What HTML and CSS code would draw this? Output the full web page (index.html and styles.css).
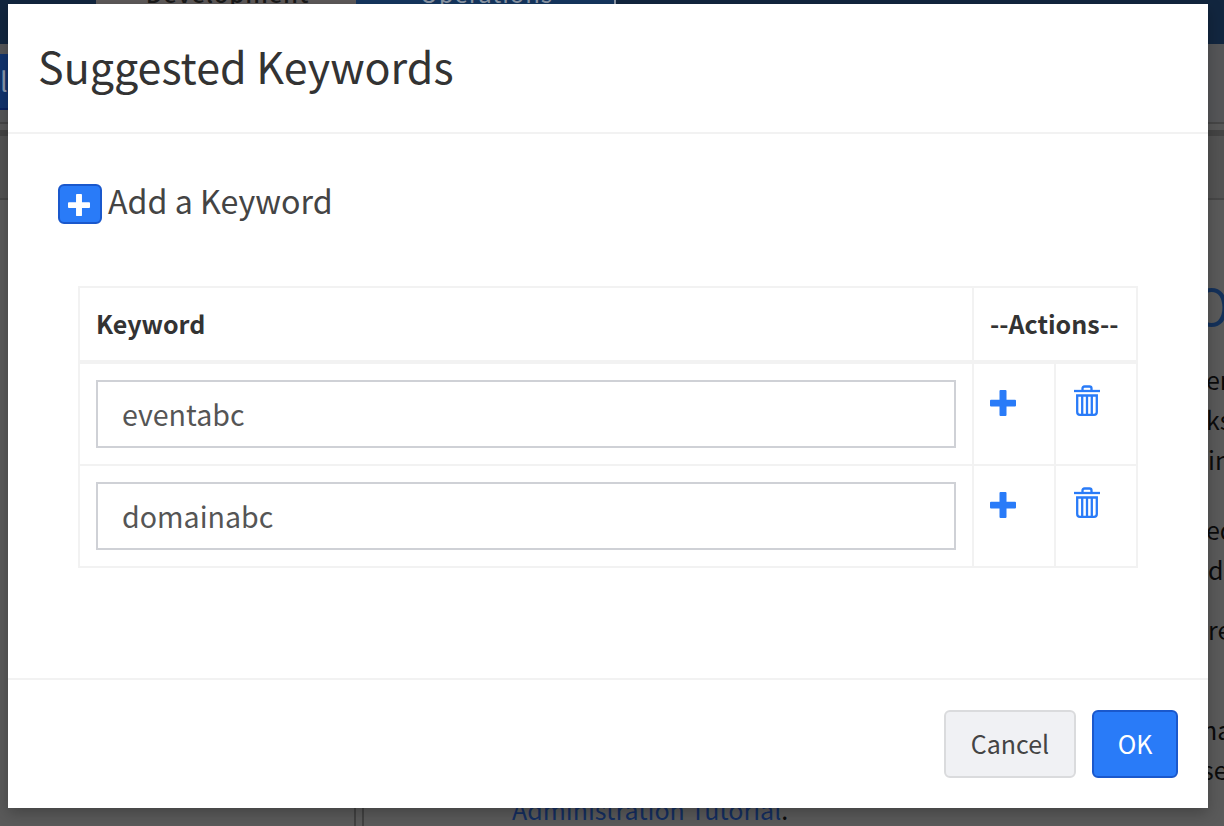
FILE: index.html
```
<!DOCTYPE html>
<html lang="en">
<head>
<meta charset="utf-8">
<title>Suggested Keywords</title>
<link rel="stylesheet" href="styles.css">
</head>
<body>
<svg class="symbols" aria-hidden="true">
  <symbol id="plus" viewBox="0 0 26 26"><path fill="currentColor" d="M10.500 0h5q1 0 1 1v8.800H25q1 0 1 1v4.600q0 1-1 1h-8.500V25q0 1-1 1h-5q-1 0-1-1v-8.600H1q-1 0-1-1v-4.600q0-1 1-1h8.500V1q0-1 1-1z"/></symbol>
  <symbol id="trash" viewBox="0 0 26 31"><g fill="none" stroke="currentColor" stroke-width="2.300"><path d="M0 6h26"/><path d="M8.500 5.500V3.500Q8.500 1.500 10.500 1.500h5Q17.500 1.500 17.500 3.500v2M3.200 10.500v16.500Q3.200 29.800 6 29.800h14q2.800 0 2.800-2.800V10.500z"/><path d="M8.200 10v20M13 10v20M17.800 10v20"/></g></symbol>
</svg>
<div class="page">
  <header class="topbar">
    <div class="tab active">Development</div>
    <div class="tab">Operations</div>
  </header>
  <div class="toolbar"><div class="tool">l</div></div>
  <div class="divider"></div>
  <div class="subbar"></div>
  <main class="columns">
    <aside class="side"></aside>
    <div class="gutter"></div>
    <article class="article">
      <h1 class="heading">O</h1>
      <p class="frag f1">en</p>
      <p class="frag f2">ks</p>
      <p class="frag f3">in</p>
      <p class="frag f4">ed</p>
      <p class="frag f5">d</p>
      <p class="frag f6">re</p>
      <p class="frag f7">na</p>
      <p class="frag f8">se</p>
      <p class="link-line"><span class="link">Administration Tutorial</span>.</p>
    </article>
  </main>
</div>
<div class="overlay">
  <section class="modal">
    <header class="modal-head">Suggested Keywords</header>
    <div class="modal-body">
      <div class="add"><button class="add-btn"><svg class="plus-sm"><use href="#plus"/></svg></button><span class="add-label">Add a Keyword</span></div>
      <div class="grid">
        <div class="row head">
          <div class="cell">Keyword</div><div class="cell">--Actions--</div>
        </div>
        <div class="row">
          <div class="cell"><div class="field">eventabc</div></div>
          <div class="cell"><svg class="plus"><use href="#plus"/></svg></div>
          <div class="cell"><svg class="trash"><use href="#trash"/></svg></div>
        </div>
        <div class="row">
          <div class="cell"><div class="field">domainabc</div></div>
          <div class="cell"><svg class="plus"><use href="#plus"/></svg></div>
          <div class="cell"><svg class="trash"><use href="#trash"/></svg></div>
        </div>
      </div>
    </div>
    <footer class="modal-foot"><button class="btn">Cancel</button><button class="btn primary">OK</button></footer>
  </section>
</div>
</body>
</html>
```
FILE: styles.css
```
* { box-sizing: border-box; }
html, body { margin: 0; height: 826px; overflow: hidden; }
body { font-family: "Noto Sans CJK SC", "Noto Sans", sans-serif; color: #333; background: #5a5a5a; }
button { font: inherit; padding: 0; margin: 0; }
.symbols { display: none; }
.page { height: 826px; overflow: hidden; }

.topbar { height: 51px; margin-top: -7px; padding-left: 96px; display: flex; background: #12263f; }
.tab { width: 260px; height: 51px; padding-left: 3px; text-align: center; font-size: 24px; line-height: 0; letter-spacing: .9px; color: #8b96a6; background: #15365f; border-right: 2px solid #8b96a6; }
.tab.active { font-weight: 500; letter-spacing: .8px; background: #5e5a5a; color: #191919; border: 0; }
.toolbar { height: 80px; padding-top: 10px; background: #555658; border-bottom: 2px solid #464646; }
.tool { width: 60px; height: 56px; background: #11336e; border-bottom: 2px solid #0a2260; color: #8b98ae; font-size: 27px; line-height: 54px; }
.divider { height: 12px; border-top: 6px solid #585858; background: #444; }
.subbar { height: 64px; background: #535353; border-bottom: 2px solid #474747; }
.columns { height: 626px; display: flex; }
.side { width: 354px; }
.gutter { width: 10px; border: solid #414141; border-width: 0 2px; }
.article { flex: 1; min-width: 0; overflow: hidden; color: #0b0b0b; white-space: nowrap; }
.heading { margin: 73px 0 0 829px; height: 64px; font-size: 50px; line-height: 63px; font-weight: 400; color: #14315a; }
.frag { margin: 0 0 0 842px; height: 40px; font-size: 25px; line-height: 40px; }
.f1 { margin-top: 22px; }
.f4 { margin-top: 30px; }
.f6 { margin-top: 20px; }
.f7 { margin-top: 60px; }
.f3, .f5, .f6 { padding-left: 2px; }
.f7, .f8 { margin-left: 838px; }
.link-line { margin: 0 0 0 148px; height: 40px; font-size: 25px; line-height: 40px; }
.link { color: #142e60; }

.overlay { position: absolute; inset: 0; padding: 4px 16px 18px 8px; }
.modal { width: 1200px; height: 804px; background: #fff; display: flex; flex-direction: column; box-shadow: 0 5px 14px rgba(0,0,0,.25); }
.modal-head { height: 130px; padding: 29px 30px 0; border-bottom: 2px solid #f2f2f2; font-size: 43px; line-height: 64px; }
.modal-body { flex: 1; padding: 50px 50px 0; }
.add { height: 40px; display: flex; gap: 6px; align-items: center; }
.add-btn { width: 44px; height: 40px; border: 2px solid #1a58cc; border-radius: 6px; background: #297bf8; color: #fff; display: flex; align-items: center; justify-content: center; }
.plus-sm { width: 22px; height: 22px; margin: 1px 2px 0 0; }
.add-label { padding-bottom: 9px; font-size: 32.2px; line-height: 40px; color: #444; }
.grid { width: 1060px; margin: 62px 0 0 20px; border: 2px solid #f2f2f2; }
.row { display: grid; grid-template-columns: 894px 82px 80px; height: 102px; border-top: 2px solid #f2f2f2; }
.row.head { height: 72px; grid-template-columns: 894px 162px; border: 0; font-size: 25px; font-weight: 700; line-height: 71px; }
.row.head + .row { height: 104px; border-top-width: 4px; }
.cell { padding: 16px; border-right: 2px solid #f2f2f2; }
.cell:last-child { border-right: 0; }
.row.head .cell { padding: 0 16px; }
.field { width: 860px; height: 68px; border: 2px solid #cfd1d6; padding-left: 24px; font-size: 28.6px; line-height: 63px; color: #555; }
.plus { display: block; width: 26px; height: 26px; margin-top: 10px; color: #297bf8; }
.trash { display: block; width: 26px; height: 31px; margin: 5px 0 0 2px; color: #297bf8; }
.modal-foot { height: 130px; padding: 30px 30px 0; border-top: 2px solid #f2f2f2; display: flex; justify-content: flex-end; gap: 16px; }
.btn { width: 132px; height: 68px; padding-bottom: 2px; border: 2px solid #dadbdd; border-radius: 6px; background: #f0f1f4; color: #444; font-size: 25px; line-height: 62px; }
.btn.primary { width: 86px; background: #297bf8; border-color: #1a58cc; color: #fff; }
```
